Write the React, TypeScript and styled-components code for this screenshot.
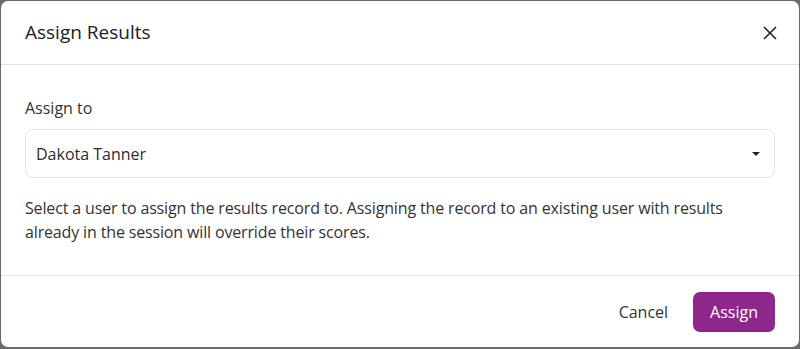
import React from 'react'
import styled, { createGlobalStyle } from 'styled-components'

const GlobalStyle = createGlobalStyle`
  * {
    box-sizing: border-box;
    margin: 0;
    padding: 0;
  }
  html, body {
    height: 100%;
  }
  body {
    background: #6a6a6a;
    font-family: "Open Sans", "Noto Sans", sans-serif;
    color: #333333;
  }
`

const Backdrop = styled.div`
  width: 800px;
  height: 349px;
  padding: 1px 1px 2px 1px;
`

const Modal = styled.div`
  width: 798px;
  height: 346px;
  background: #ffffff;
  border-radius: 7px;
  display: flex;
  flex-direction: column;
  overflow: hidden;
`

const Header = styled.div`
  height: 64px;
  flex: none;
  display: flex;
  align-items: center;
  justify-content: space-between;
  padding: 0 17px 0 24px;
  border-bottom: 1px solid #dedede;
`

const Title = styled.h2`
  font-size: 19px;
  font-weight: 400;
  color: #222222;
  line-height: 27px;
`

const CloseButton = styled.button`
  width: 24px;
  height: 24px;
  border: none;
  background: none;
  display: flex;
  align-items: center;
  justify-content: center;
  cursor: pointer;
`

const Body = styled.div`
  flex: 1;
  padding: 31px 24px 31px 24px;
  border-bottom: 1px solid #dedede;
`

const Label = styled.label`
  display: block;
  font-size: 16px;
  line-height: 24px;
  color: #333333;
  margin-bottom: 9px;
`

const SelectBox = styled.div`
  height: 49px;
  border: 1px solid #e3e3e3;
  border-radius: 8px;
  display: flex;
  align-items: center;
  justify-content: space-between;
  padding: 0 14px 0 10px;
  font-size: 16px;
  color: #2b2b2b;
`

const Caret = styled.span`
  width: 0;
  height: 0;
  border-left: 4px solid transparent;
  border-right: 4px solid transparent;
  border-top: 4px solid #222222;
  margin-top: 1px;
`

const Help = styled.p`
  margin-top: 18px;
  font-size: 16px;
  line-height: 24px;
  letter-spacing: -0.15px;
  color: #333333;
`

const Footer = styled.div`
  flex: 1;
  display: flex;
  align-items: center;
  justify-content: flex-end;
  gap: 25px;
  padding: 0 24px 0 24px;
`

interface ActionProps {
  primary?: boolean
}

const Action = styled.button<ActionProps>`
  font-family: inherit;
  font-size: 16px;
  height: 40px;
  border: none;
  border-radius: 7px;
  cursor: pointer;
  color: ${props => (props.primary ? '#ffffff' : '#333333')};
  background: ${props => (props.primary ? '#8f268c' : 'transparent')};
  padding: ${props => (props.primary ? '0 17px' : '0')};
`

export default function App() {
  return (
    <>
      <GlobalStyle />
      <Backdrop>
        <Modal>
          <Header>
            <Title>Assign Results</Title>
            <CloseButton aria-label="Close">
              <svg width="14" height="14" viewBox="0 0 14 14">
                <path d="M1 1 L13 13 M13 1 L1 13" stroke="#222" strokeWidth="1.6" />
              </svg>
            </CloseButton>
          </Header>
          <Body>
            <Label>Assign to</Label>
            <SelectBox>
              <span>Dakota Tanner</span>
              <Caret />
            </SelectBox>
            <Help>
              Select a user to assign the results record to. Assigning the record to an existing user with results
              already in the session will override their scores.
            </Help>
          </Body>
          <Footer>
            <Action>Cancel</Action>
            <Action primary>Assign</Action>
          </Footer>
        </Modal>
      </Backdrop>
    </>
  )
}
